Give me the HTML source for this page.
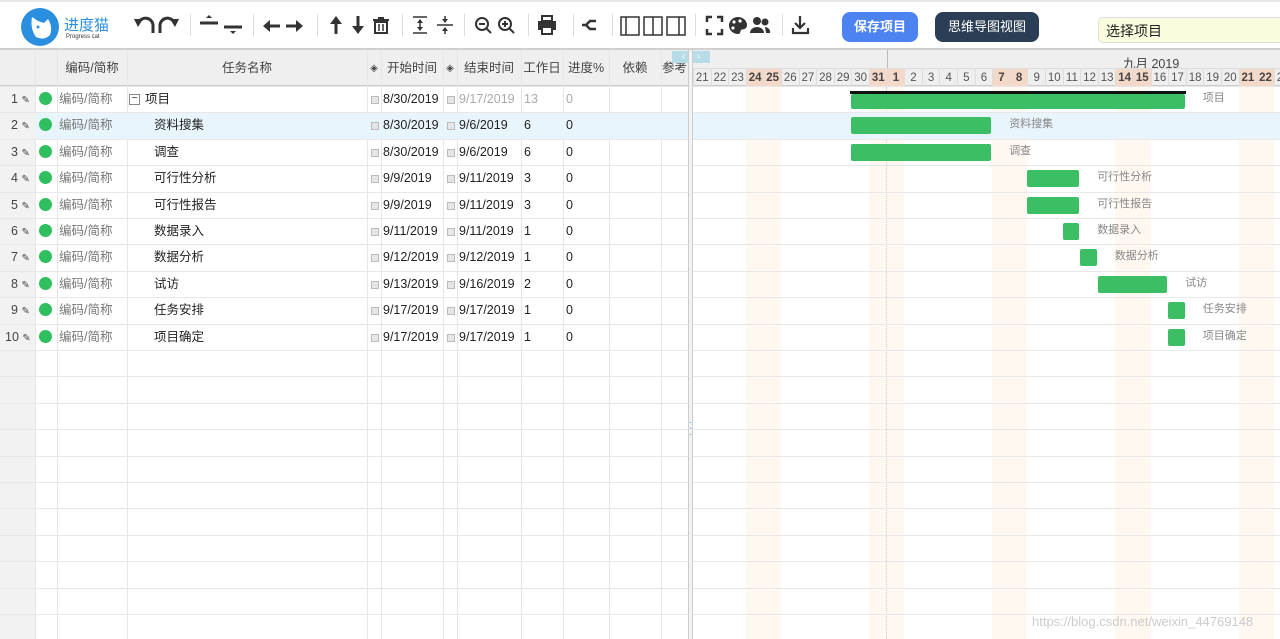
<!DOCTYPE html>
<html><head><meta charset="utf-8">
<style>
*{box-sizing:border-box;margin:0;padding:0}
body{width:1280px;height:639px;overflow:hidden;background:#fff;font-family:"Liberation Sans","Noto Sans CJK SC",sans-serif;font-size:12px;color:#222;position:relative}
.a{position:absolute}
.tb{height:50px;border-top:2px solid #e8e8e8;border-bottom:2px solid #cfcfcf;left:0;right:0;top:0}
.hd{background:#efefef;color:#444;font-size:12px;text-align:center}
.vl{position:absolute;width:1px;background:#e6e6e6}
.hl{position:absolute;height:1px;background:#e8e8e8}
.cell{position:absolute;font-size:12.5px;line-height:26px;white-space:nowrap}
.bar{position:absolute;background:#3cbf64;border-radius:2px;height:17px}
.lbl{position:absolute;color:#888;font-size:11px;line-height:17px}
.cb{display:inline-block;width:8px;height:8px;border:1px solid #bbb;background:#e6e6e6;margin-right:4px;vertical-align:middle}
</style></head><body>
<div class="a tb"></div>
<svg class="a" style="left:20px;top:7px" width="42" height="40" viewBox="0 0 42 40"><circle cx="20" cy="20" r="19" fill="#2b8fe0"/><path d="M12 10 Q10 22 16 30 Q24 34 30 28 Q33 20 28 12 L24 16 L18 14 Z" fill="#fff"/><circle cx="18" cy="20" r="1.5" fill="#2b8fe0"/></svg>
<div class="a" style="left:64px;top:14px;color:#2b8fe0;font-size:15px">进度猫</div>
<div class="a" style="left:66px;top:34px;color:#333;font-size:6px">Progress cat</div>
<svg class="a" style="left:0;top:0" width="820" height="50" fill="none" stroke="#333" stroke-width="3">
<path d="M153 33 V25 A7.5 7.5 0 0 0 139 22"/><polygon points="134,19 143,19 138,27" fill="#333" stroke="none"/>
<path d="M160 33 V25 A7.5 7.5 0 0 1 174 22"/><polygon points="179,19 170,19 175,27" fill="#333" stroke="none"/>
<line x1="190.5" y1="14" x2="190.5" y2="36" stroke="#ddd" stroke-width="1"/>
<line x1="200" y1="23" x2="218" y2="23"/><polygon points="206,18 212,18 209,15" fill="#333" stroke="none"/>
<line x1="224" y1="27" x2="242" y2="27"/><polygon points="230,31 236,31 233,34" fill="#333" stroke="none"/>
<line x1="253.5" y1="14" x2="253.5" y2="36" stroke="#ddd" stroke-width="1"/>
<line x1="266" y1="26" x2="280" y2="26"/><polygon points="263,26 270,20 270,32" fill="#333" stroke="none"/>
<line x1="286" y1="26" x2="300" y2="26"/><polygon points="303,26 296,20 296,32" fill="#333" stroke="none"/>
<line x1="317.5" y1="14" x2="317.5" y2="36" stroke="#ddd" stroke-width="1"/>
<line x1="336" y1="21" x2="336" y2="34"/><polygon points="336,16 330,24 342,24" fill="#333" stroke="none"/>
<line x1="358" y1="16" x2="358" y2="29"/><polygon points="358,34 352,26 364,26" fill="#333" stroke="none"/>
<path d="M375 22 h12 v11 h-12 z M373 20 h16 M378 18 h6" stroke-width="2"/><path d="M379 24v7M383 24v7" stroke-width="1.5"/>
<line x1="402.5" y1="14" x2="402.5" y2="36" stroke="#ddd" stroke-width="1"/>
<path d="M413 17h14M413 33h14M420 20v10" stroke-width="1.5"/><polygon points="420,19 417,23 423,23" fill="#333" stroke="none"/><polygon points="420,31 417,27 423,27" fill="#333" stroke="none"/>
<path d="M437 25h16" stroke-width="1.5"/><path d="M445 16v6M445 28v6" stroke-width="1.5"/><polygon points="445,23 442,19 448,19" fill="#333" stroke="none"/><polygon points="445,27 442,31 448,31" fill="#333" stroke="none"/>
<line x1="464.5" y1="14" x2="464.5" y2="36" stroke="#ddd" stroke-width="1"/>
<circle cx="482" cy="24" r="6" stroke-width="2"/><path d="M486 28l5 5M479 24h6" stroke-width="2"/>
<circle cx="505" cy="24" r="6" stroke-width="2"/><path d="M509 28l5 5M502 24h6M505 21v6" stroke-width="2"/>
<line x1="528.5" y1="14" x2="528.5" y2="36" stroke="#ddd" stroke-width="1"/>
<rect x="542" y="16" width="10" height="5" stroke-width="2"/><rect x="538" y="21" width="18" height="9" fill="#333" stroke="none"/><rect x="542" y="27" width="10" height="7" fill="#fff" stroke-width="2"/>
<line x1="573.5" y1="14" x2="573.5" y2="36" stroke="#ddd" stroke-width="1"/>
<path d="M596 21h-6l-4 4 4 4h6" stroke-width="2.5"/><path d="M582 25h4" stroke-width="2.5"/>
<line x1="612.5" y1="14" x2="612.5" y2="36" stroke="#ddd" stroke-width="1"/>
<g stroke-width="1.5"><rect x="621" y="17" width="18" height="18"/><line x1="626" y1="17" x2="626" y2="35"/><rect x="644" y="17" width="18" height="18"/><line x1="653" y1="17" x2="653" y2="35"/><rect x="667" y="17" width="18" height="18"/><line x1="679" y1="17" x2="679" y2="35"/></g>
<line x1="695.5" y1="14" x2="695.5" y2="36" stroke="#ddd" stroke-width="1"/>
<path d="M707 22v-5h5M717 17h5v5M722 29v5h-5M712 34h-5v-5" stroke-width="2.5"/>
<path d="M738 17a9 8.5 0 1 0 0 17c3 0 2-3 3-4s6 0 6-5a9 8 0 0 0-9-8z" fill="#333" stroke="none"/><circle cx="734" cy="22" r="1.6" fill="#fff" stroke="none"/><circle cx="740" cy="21" r="1.6" fill="#fff" stroke="none"/><circle cx="733" cy="28" r="1.6" fill="#fff" stroke="none"/>
<circle cx="757" cy="21" r="4" fill="#333" stroke="none"/><path d="M750 33a7 6 0 0 1 14 0z" fill="#333" stroke="none"/><circle cx="765" cy="22" r="3.5" fill="#333" stroke="none"/><path d="M765 27a6 5 0 0 1 5 6h-4" fill="#333" stroke="none"/>
<line x1="782.5" y1="14" x2="782.5" y2="36" stroke="#ddd" stroke-width="1"/>
<path d="M800 16v12M795 23l5 5 5-5M793 28v5h15v-5" stroke-width="2.2"/>
</svg>
<div class="a" style="left:842px;top:12px;width:76px;height:30px;background:#4d83f0;border-radius:8px;color:#fff;font-size:13px;font-weight:bold;line-height:30px;text-align:center">保存项目</div>
<div class="a" style="left:935px;top:12px;width:104px;height:30px;background:#2c3e55;border-radius:8px;color:#fff;font-size:13px;line-height:30px;text-align:center">思维导图视图</div>
<div class="a" style="left:1098px;top:17px;width:190px;height:26px;background:#fbfbdd;border:1px solid #ddd;border-radius:5px;font-size:14px;line-height:26px;padding-left:7px">选择项目</div>
<div id="g"></div>
<div class="a" style="left:1032px;top:614px;color:#ccc;font-size:13px">https://blog.csdn.net/weixin_44769148</div>
<script>
var h='',RT=86,RH=26.4,G=693,D=17.6;
h+='<div class="a hd" style="left:0;top:50px;width:688px;height:37px;border-bottom:2px solid #ccc"></div>';
var cols=[[0,35,''],[35,57,''],[57,127,'编码/简称'],[127,367,'任务名称'],[367,381,'◈'],[381,443,'开始时间'],[443,457,'◈'],[457,521,'结束时间'],[521,563,'工作日'],[563,609,'进度%'],[609,661,'依赖'],[661,688,'参考']];
cols.forEach(c=>{h+='<div class="a" style="left:'+c[0]+'px;top:50px;width:'+(c[1]-c[0])+'px;height:37px;line-height:37px;text-align:center;color:#444;overflow:hidden;font-size:'+(c[2]=='◈'?10:12.5)+'px">'+c[2]+'</div>';h+='<div class="vl" style="left:'+c[1]+'px;top:50px;height:589px"></div>';});
h+='<div class="a" style="left:0;top:87px;width:35px;height:552px;background:#f2f2f2"></div>';
h+='<div class="a" style="left:'+G+'px;top:50px;width:600px;height:37px;background:#efefef;border-bottom:2px solid #ccc"></div>';
h+='<div class="a" style="left:1123px;top:53px;color:#444;font-size:12.5px">九月 2019</div>';
h+='<div class="vl" style="left:887px;top:50px;height:18px;background:#bbb"></div>';
h+='<div class="a" style="left:672px;top:51px;width:38px;height:12px;background:#b8dbe8;color:#fff;font-size:10px;line-height:12px;text-align:center">‹ ● ›</div>';
var days=[21,22,23,24,25,26,27,28,29,30,31];for(var d=1;d<=23;d++)days.push(d);
days.forEach((d,i)=>{var x=G+i*D;var we=(i%7==3||i%7==4);
if(we)h+='<div class="a" style="left:'+x+'px;top:87px;width:'+D+'px;height:552px;background:#fef8f0"></div>';
h+='<div class="a" style="left:'+x+'px;top:68px;width:'+D+'px;height:19px;line-height:19px;text-align:center;font-size:11.5px;border-left:1px solid #ddd;border-top:1px solid #ddd;'+(we?'background:#f5d9c8;font-weight:bold;color:#444':'color:#555')+'">'+d+'</div>';});
h+='<div class="a" style="left:886px;top:87px;height:552px;border-left:1px dotted #ccc"></div>';
h+='<div class="a" style="left:35px;top:113px;width:1245px;height:26px;background:#e9f5fd"></div>';
for(var r=0;r<21;r++){var y=RT+r*RH;h+='<div class="hl" style="left:0;width:1280px;top:'+Math.round(y)+'px"></div>';}
var T=[['项目','8/30/2019','9/17/2019',13,9,28],['资料搜集','8/30/2019','9/6/2019',6,9,17],['调查','8/30/2019','9/6/2019',6,9,17],['可行性分析','9/9/2019','9/11/2019',3,19,22],['可行性报告','9/9/2019','9/11/2019',3,19,22],['数据录入','9/11/2019','9/11/2019',1,21,22],['数据分析','9/12/2019','9/12/2019',1,22,23],['试访','9/13/2019','9/16/2019',2,23,27],['任务安排','9/17/2019','9/17/2019',1,27,28],['项目确定','9/17/2019','9/17/2019',1,27,28]];
T.forEach((t,i)=>{var y=Math.round(RT+i*RH);var p=i==0;
h+='<div class="cell" style="left:'+(i==9?5:11)+'px;top:'+y+'px;color:#444">'+(i+1)+' <span style="font-size:10px">✎</span></div>';
h+='<div class="a" style="left:39px;top:'+(y+6)+'px;width:13px;height:13px;border-radius:50%;background:#2fbf5f"></div>';
h+='<div class="cell" style="left:59px;top:'+y+'px;color:#777">编码/简称</div>';
h+='<div class="cell" style="left:'+(p?129:154)+'px;top:'+y+'px">'+(p?'<span style="display:inline-block;width:11px;height:11px;border:1px solid #888;font-size:10px;line-height:8px;text-align:center;vertical-align:middle;margin-right:5px">−</span>':'')+t[0]+'</div>';
h+='<div class="cell" style="left:371px;top:'+y+'px"><span class="cb"></span>'+t[1]+'</div>';
h+='<div class="cell" style="left:447px;top:'+y+'px;'+(p?'color:#aaa':'')+'"><span class="cb"></span>'+t[2]+'</div>';
h+='<div class="cell" style="left:524px;top:'+y+'px;'+(p?'color:#aaa':'')+'">'+t[3]+'</div>';
h+='<div class="cell" style="left:566px;top:'+y+'px;'+(p?'color:#aaa':'')+'">0</div>';
var x1=G+t[4]*D,x2=G+t[5]*D;
if(p)h+='<div class="a" style="left:'+(x1-1)+'px;top:'+(y+5)+'px;width:'+(x2-x1+1)+'px;height:3px;background:#111"></div>';
h+='<div class="bar" style="left:'+x1+'px;top:'+(y+(p?8:5))+'px;width:'+(x2-x1-1)+'px;height:'+(p?15:17)+'px"></div>';
h+='<div class="lbl" style="left:'+(x2+17)+'px;top:'+(y+4)+'px">'+t[0]+'</div>';});
h+='<div class="a" style="left:688px;top:50px;width:5px;height:589px;background:#f3f3f3;border-left:1px solid #ccc;border-right:1px solid #ccc"></div>';
h+='<div class="a" style="left:689px;top:420px;color:#4a90d9;font-size:10px;line-height:6px">·<br>·<br>·</div>';
document.getElementById('g').innerHTML=h;
</script>
</body></html>
